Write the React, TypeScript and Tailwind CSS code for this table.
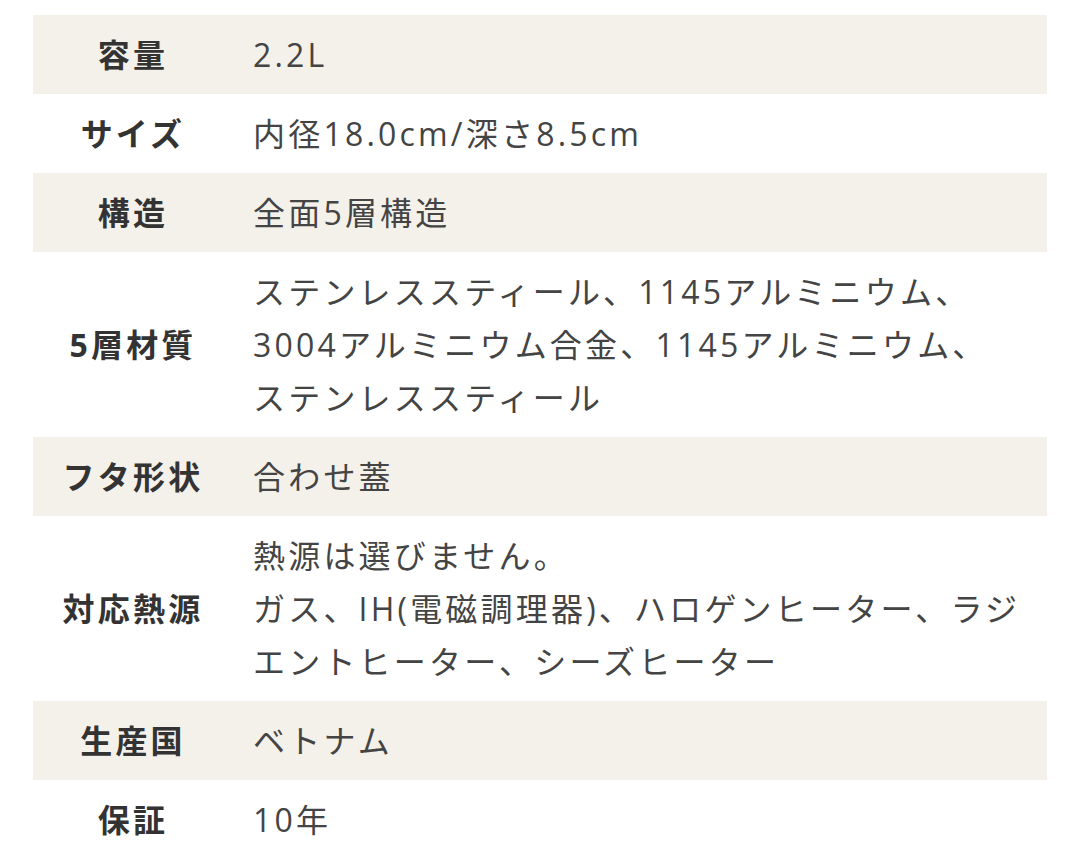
import React from "react";

type Row = { label: string; lines: string[]; shaded: boolean };

const rows: Row[] = [
  { label: "容量", lines: ["2.2L"], shaded: true },
  { label: "サイズ", lines: ["内径18.0cm/深さ8.5cm"], shaded: false },
  { label: "構造", lines: ["全面5層構造"], shaded: true },
  {
    label: "5層材質",
    lines: [
      "ステンレススティール、1145アルミニウム、",
      "3004アルミニウム合金、1145アルミニウム、",
      "ステンレススティール",
    ],
    shaded: false,
  },
  { label: "フタ形状", lines: ["合わせ蓋"], shaded: true },
  {
    label: "対応熱源",
    lines: [
      "熱源は選びません。",
      "ガス、IH(電磁調理器)、ハロゲンヒーター、ラジ",
      "エントヒーター、シーズヒーター",
    ],
    shaded: false,
  },
  { label: "生産国", lines: ["ベトナム"], shaded: true },
  { label: "保証", lines: ["10年"], shaded: false },
];

export default function App() {
  return (
    <div
      className="min-h-[864px] bg-white px-[33px] pt-[15px]"
      style={{ fontFamily: '"Open Sans", "Noto Sans CJK JP", sans-serif' }}
    >
      <div className="flex flex-col">
        {rows.map((r) => (
          <div
            key={r.label}
            className={`grid grid-cols-[200px_1fr] items-center py-[13px] ${
              r.shaded ? "bg-[#f4f0ea]" : "bg-white"
            }`}
          >
            <div className="text-center text-[32px] font-bold leading-[53px] tracking-[0.1em] text-[#333333]">
              {r.label}
            </div>
            <div className="pl-[20px] text-[32px] leading-[53px] tracking-[0.1em] text-[#444444] whitespace-nowrap">
              {r.lines.map((l, i) => (
                <div key={i}>{l}</div>
              ))}
            </div>
          </div>
        ))}
      </div>
    </div>
  );
}
